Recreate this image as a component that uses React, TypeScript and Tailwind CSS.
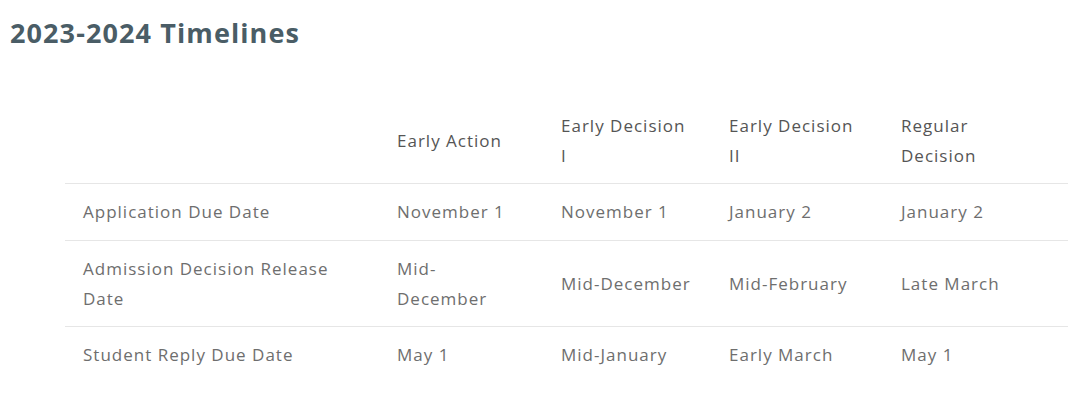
import React from 'react';

const columns = ['Early Action', 'Early Decision I', 'Early Decision II', 'Regular Decision'];

const rows = [
  { label: 'Application Due Date', values: ['November 1', 'November 1', 'January 2', 'January 2'] },
  { label: 'Admission Decision Release Date', values: ['Mid-December', 'Mid-December', 'Mid-February', 'Late March'] },
  { label: 'Student Reply Due Date', values: ['May 1', 'Mid-January', 'Early March', 'May 1'] }
];

// column widths and right padding taken from the reference layout
const widths = ['w-[314px]', 'w-[164px]', 'w-[168px]', 'w-[172px]', 'w-[185px]'];
const pads = ['pr-[20px]', 'pr-[16px]', 'pr-[16px]', 'pr-[30px]'];

export default function App() {
  return (
    <div className="w-[1080px] h-[402px] bg-white font-['Open_Sans',sans-serif] overflow-hidden">
      <h2 className="pl-[10px] pt-[16px] text-[27px] leading-[34px] font-bold text-[#4a5d66] tracking-[1.1px]">
        2023-2024 Timelines
      </h2>

      <div className="pl-[65px] pt-[61px]">
        <table className="w-[1003px] table-fixed border-collapse text-[17px] leading-[30px] text-[#6e6e6e] tracking-[1px]">
          <thead>
            <tr className="border-b border-[#e6e6e6]">
              <th className={`${widths[0]} h-[72px]`}></th>
              {columns.map((c, i) => (
                <th
                  key={c}
                  className={`${widths[i + 1]} ${pads[i]} h-[72px] pl-[18px] pt-0 pb-[12px] text-left font-normal text-[#555555] align-middle`}
                >
                  {c}
                </th>
              ))}
            </tr>
          </thead>
          <tbody>
            {rows.map((r, ri) => (
              <tr key={r.label} className={ri < rows.length - 1 ? 'border-b border-[#e6e6e6]' : ''}>
                <td className="pl-[18px] pr-[40px] pt-[13px] pb-[12.5px] align-middle">{r.label}</td>
                {r.values.map((v, vi) => (
                  <td key={vi} className={`${pads[vi]} pl-[18px] pt-[13px] pb-[12.5px] align-middle`}>
                    {v}
                  </td>
                ))}
              </tr>
            ))}
          </tbody>
        </table>
      </div>
    </div>
  );
}
